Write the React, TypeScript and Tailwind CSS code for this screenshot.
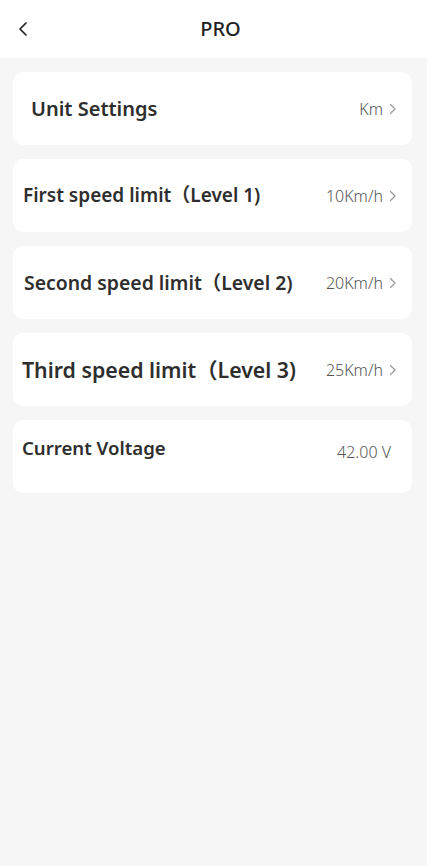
import { ChevronLeft } from 'lucide-react'

type Row = {
  label: string
  value: string
  arrow: boolean
  pad: string
  size: string
  align: string
}

const rows: Row[] = [
  { label: 'Unit Settings', value: 'Km', arrow: true, pad: 'pl-[18px]', size: 'text-[20px]', align: 'items-center' },
  { label: 'First speed limit（Level 1)', value: '10Km/h', arrow: true, pad: 'pl-[10px]', size: 'text-[19px]', align: 'items-center' },
  { label: 'Second speed limit（Level 2)', value: '20Km/h', arrow: true, pad: 'pl-[11px]', size: 'text-[19.4px]', align: 'items-center' },
  { label: 'Third speed limit（Level 3)', value: '25Km/h', arrow: true, pad: 'pl-[9px]', size: 'text-[21.3px]', align: 'items-center' },
  { label: 'Current Voltage', value: '42.00 V', arrow: false, pad: 'pl-[9px]', size: 'text-[18.6px]', align: 'items-start pt-[14px]' },
]

function Chevron() {
  return (
    <svg width="8" height="12" viewBox="0 0 8 12" className="ml-[6px]">
      <path d="M1.5 1.5 L6 6 L1.5 10.5" fill="none" stroke="#999" strokeWidth="1.2" strokeLinecap="round" strokeLinejoin="round" />
    </svg>
  )
}

export default function App() {
  return (
    <div
      className="min-h-[866px] w-[427px] bg-[#f6f6f6] text-[#2e2e2e]"
      style={{ fontFamily: '"Noto Sans", "Noto Sans CJK SC", sans-serif' }}
    >
      {/* Header */}
      <header className="relative flex h-[58px] items-center justify-center bg-white">
        <ChevronLeft className="absolute left-[11px] top-[17px] h-[24px] w-[24px] text-[#222]" strokeWidth={1.7} />
        <h1 className="ml-[14px] text-[20px] font-medium text-[#1f1f1f]">PRO</h1>
      </header>

      <div className="flex flex-col gap-[14px] pt-[14px] pl-[13px] pr-[15px]">
        {rows.map((row) => (
          <div key={row.label} className={`flex h-[73px] justify-between rounded-[10px] bg-white ${row.align} ${row.pad}`}>
            <span className={`font-semibold ${row.size}`}>{row.label}</span>
            <div className={`flex items-center text-[16px] font-light text-[#555] ${row.arrow ? 'pr-[15px]' : 'pr-[21px] pt-[6px]'}`}>
              <span>{row.value}</span>
              {row.arrow && <Chevron />}
            </div>
          </div>
        ))}
      </div>
    </div>
  )
}
